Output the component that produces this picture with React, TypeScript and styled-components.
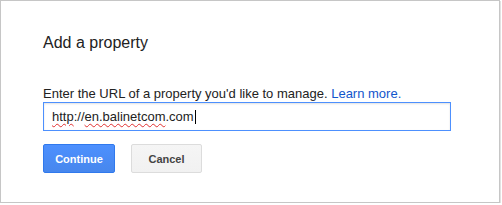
import React, { FC } from "react";
import styled, { createGlobalStyle } from "styled-components";

const GlobalStyle = createGlobalStyle`
  body {
    margin: 0;
    background: #fff;
    font-family: Arial, "Liberation Sans", sans-serif;
  }
`;

const Dialog = styled.div`
  box-sizing: border-box;
  width: 500px;
  padding: 32px 42px 29px;
  background: #fff;
  border: 1px solid #c6c6c6;
  box-shadow: 1px 1px 0 #e2e2e2;
`;

const Title = styled.div`
  font-size: 16px;
  line-height: 20px;
  color: #222;
  margin-bottom: 33px;
`;

const Prompt = styled.div`
  font-size: 13px;
  line-height: 16px;
  color: #222;
`;

const Link = styled.a`
  color: #15c;
  text-decoration: none;
`;

const UrlField = styled.div`
  box-sizing: border-box;
  width: 408px;
  height: 29px;
  padding: 0 8px;
  display: flex;
  align-items: center;
  font-size: 13px;
  color: #222;
  border: 1px solid #4d90fe;
  box-shadow: inset 0 1px 2px rgba(0, 0, 0, 0.12);
  white-space: pre;
`;

const Misspelled = styled.span`
  text-decoration: underline wavy #e03030;
  text-decoration-thickness: 1px;
  text-underline-offset: 2px;
`;

const Caret = styled.span`
  display: inline-block;
  width: 1px;
  height: 14px;
  background: #000;
  margin-left: 1px;
`;

const Actions = styled.div`
  display: flex;
  gap: 16px;
  margin-top: 13px;
`;

const Button = styled.button<{ $primary?: boolean }>`
  box-sizing: border-box;
  width: ${p => (p.$primary ? "72px" : "71px")};
  height: 29px;
  padding: 0;
  border-radius: 2px;
  font-family: Arial, "Liberation Sans", sans-serif;
  font-size: 11px;
  font-weight: bold;
  cursor: pointer;
  border: 1px solid ${p => (p.$primary ? "#3079ed" : "#dcdcdc")};
  color: ${p => (p.$primary ? "#fff" : "#444")};
  background: ${p =>
    p.$primary
      ? "linear-gradient(#4d90fe, #4787ed)"
      : "linear-gradient(#f5f5f5, #f1f1f1)"};
`;

const App: FC = () => (
  <>
    <GlobalStyle />
    <Dialog>
      <Title>Add a property</Title>
      <Prompt>
        Enter the URL of a property you'd like to manage.{" "}
        <Link href="#">Learn more.</Link>
      </Prompt>
      <UrlField>
        <Misspelled>http</Misspelled>://<Misspelled>en.balinetcom</Misspelled>.com
        <Caret />
      </UrlField>
      <Actions>
        <Button $primary>Continue</Button>
        <Button>Cancel</Button>
      </Actions>
    </Dialog>
  </>
);

export default App;
